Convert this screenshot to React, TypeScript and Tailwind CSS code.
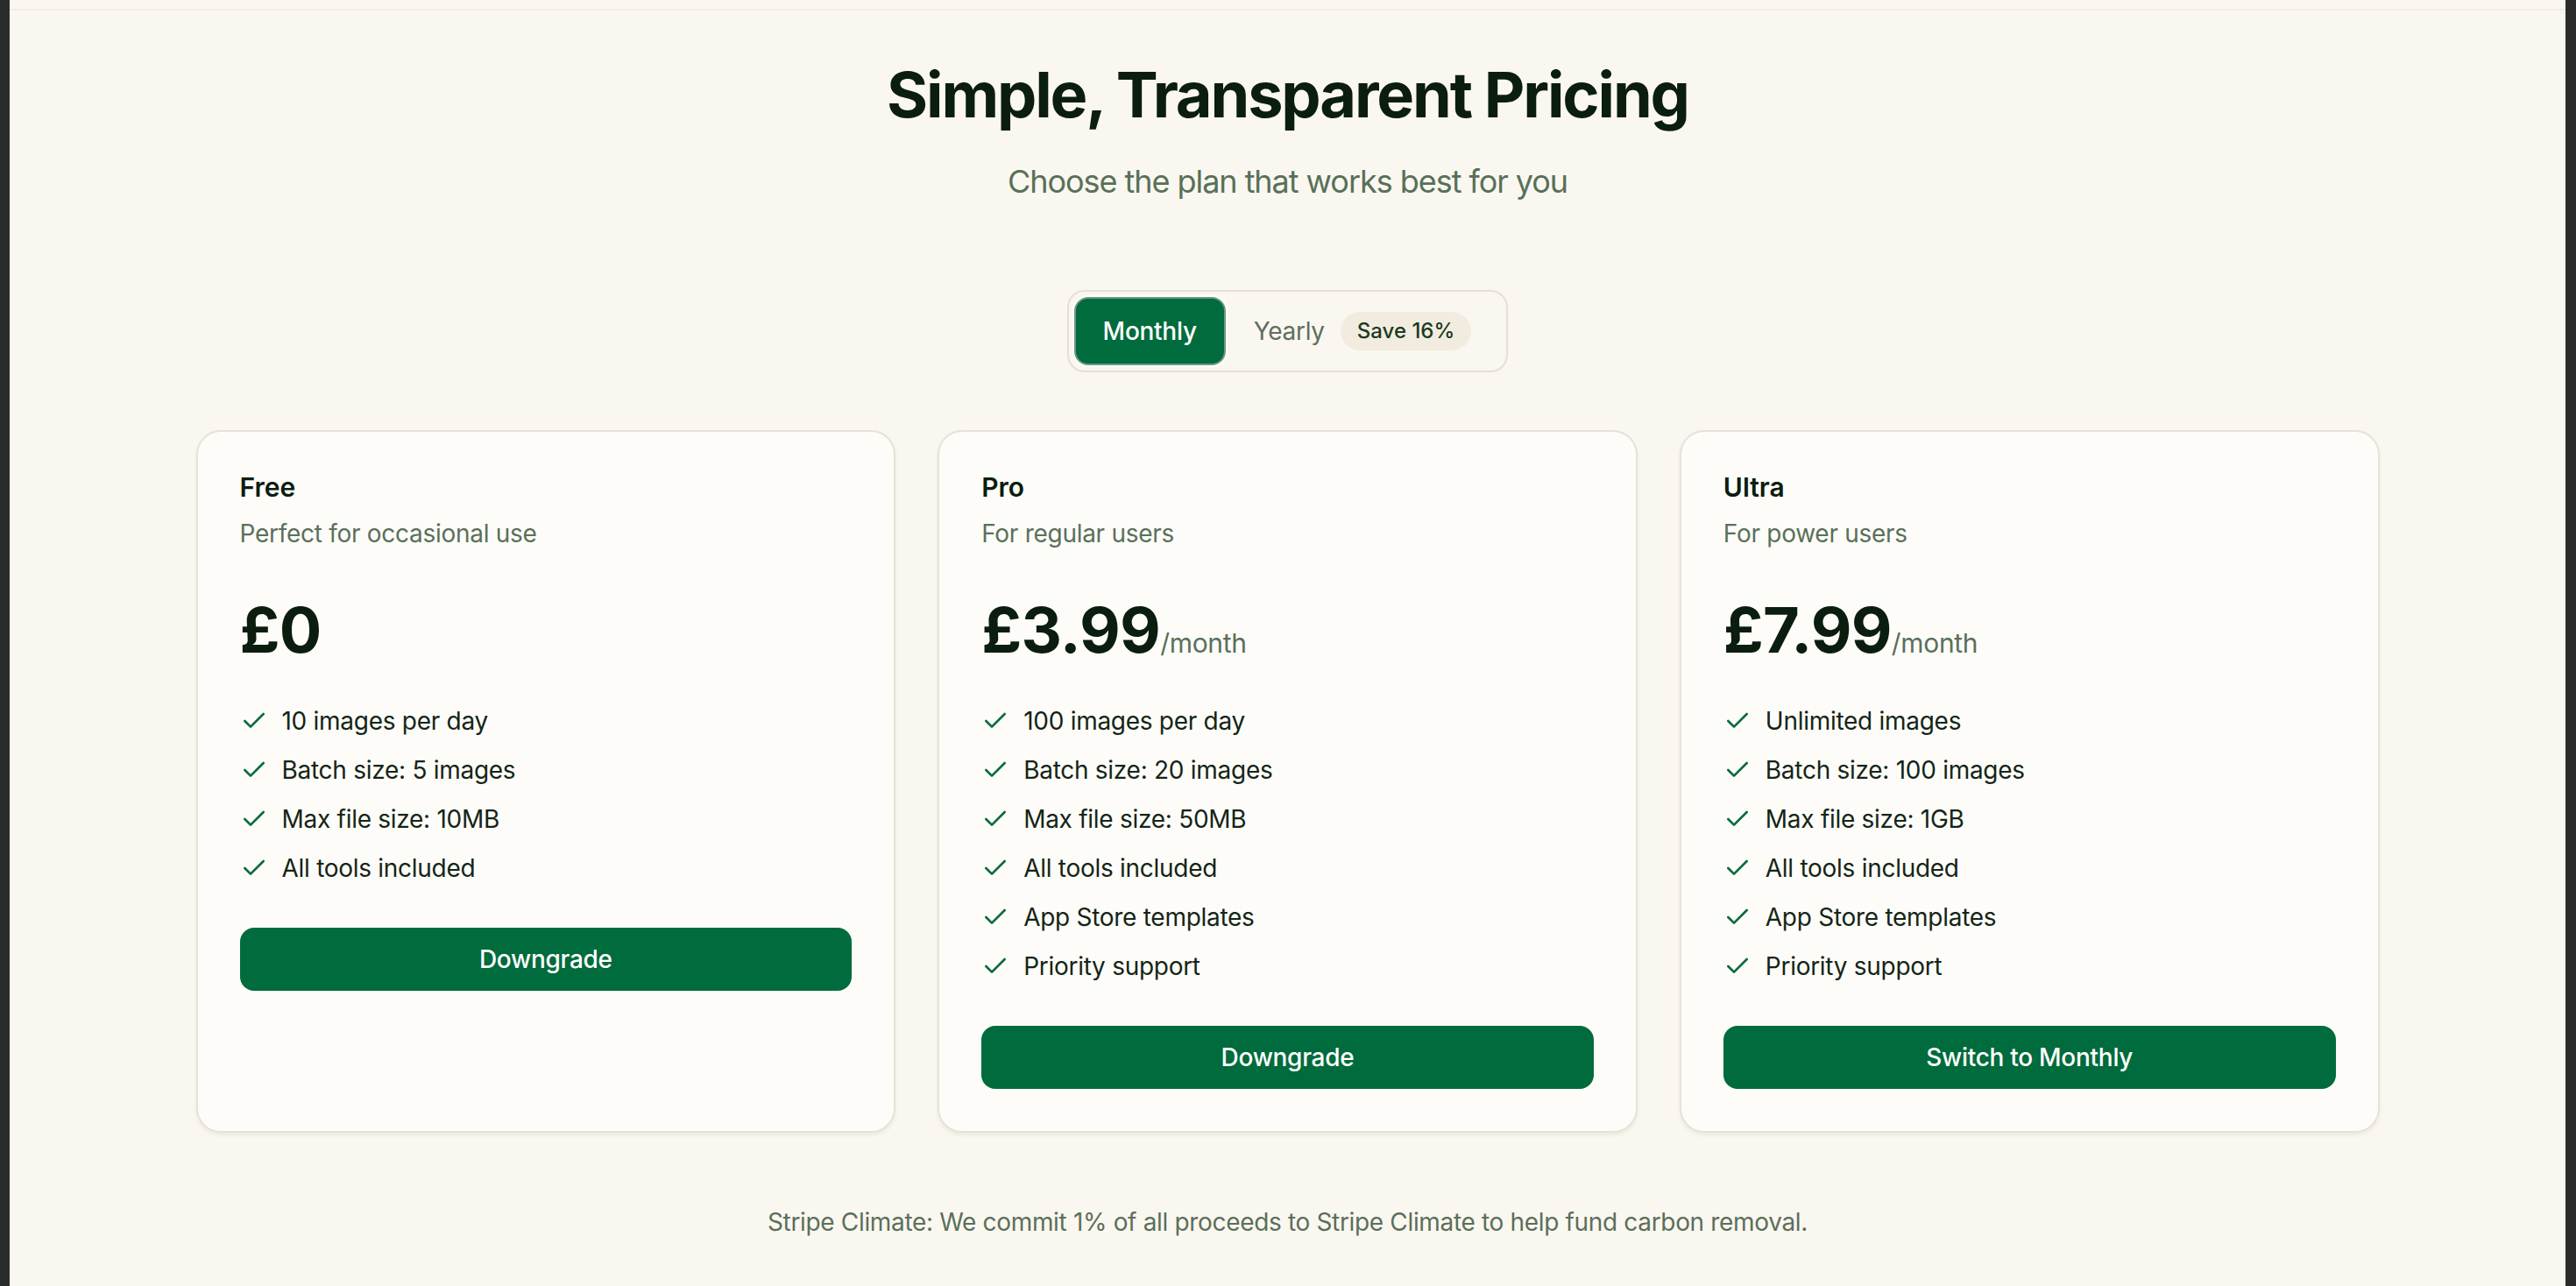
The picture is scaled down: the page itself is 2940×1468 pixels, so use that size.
import { Check } from "lucide-react";

type Plan = {
  name: string;
  blurb: string;
  price: string;
  perMonth: boolean;
  features: string[];
  cta: string;
};

const plans: Plan[] = [
  {
    name: "Free",
    blurb: "Perfect for occasional use",
    price: "£0",
    perMonth: false,
    features: ["10 images per day", "Batch size: 5 images", "Max file size: 10MB", "All tools included"],
    cta: "Downgrade",
  },
  {
    name: "Pro",
    blurb: "For regular users",
    price: "£3.99",
    perMonth: true,
    features: [
      "100 images per day",
      "Batch size: 20 images",
      "Max file size: 50MB",
      "All tools included",
      "App Store templates",
      "Priority support",
    ],
    cta: "Downgrade",
  },
  {
    name: "Ultra",
    blurb: "For power users",
    price: "£7.99",
    perMonth: true,
    features: [
      "Unlimited images",
      "Batch size: 100 images",
      "Max file size: 1GB",
      "All tools included",
      "App Store templates",
      "Priority support",
    ],
    cta: "Switch to Monthly",
  },
];

function PlanCard({ plan }: { plan: Plan }) {
  return (
    <div className="flex flex-col rounded-[28px] border-2 border-[#e7e2d7] bg-[#fdfcf9] p-12 shadow-[0_3px_4px_rgba(70,55,20,0.07)]">
      <div className="text-[30px] font-semibold leading-[30px] text-[#0b1d0f]">{plan.name}</div>
      <div className="mt-[18px] text-[28px] leading-[40px] tracking-[-0.01em] text-[#5a705a]">{plan.blurb}</div>
      <div className="mt-[50px] flex items-baseline">
        <span className="text-[72px] font-bold leading-[80px] tracking-[-0.01em] text-[#0b1d0f]">{plan.price}</span>
        {plan.perMonth && <span className="text-[30px] tracking-[-0.01em] text-[#5a705a]">/month</span>}
      </div>
      <ul className="mt-[44px] flex flex-col gap-4">
        {plan.features.map((f) => (
          <li key={f} className="flex items-center gap-4 text-[28px] leading-[40px] tracking-[-0.01em] text-[#142516]">
            <Check size={32} strokeWidth={2} className="shrink-0 text-[#0b6b3e]" />
            <span>{f}</span>
          </li>
        ))}
      </ul>
      <button className="mt-12 h-[72px] w-full rounded-2xl bg-[#006b3c] text-[28px] font-medium tracking-[-0.01em] text-white">
        {plan.cta}
      </button>
    </div>
  );
}

export default function App() {
  return (
    <div className="flex min-h-screen font-['Inter','Noto_Sans',sans-serif]">
      <div className="w-[11px] shrink-0 bg-[#2b2b2b]" />
      <div className="flex flex-1 flex-col bg-[#faf7f0]">
        <div className="h-[12px] border-b-2 border-[#f1ede4]" />
        <div className="flex flex-col items-center pt-14 pb-16">
          <h1 className="text-[72px] font-bold leading-[80px] tracking-[-0.03em] text-[#0b1d0f]">
            Simple, Transparent Pricing
          </h1>
          <p className="mt-[31px] text-[36px] leading-[56px] tracking-[-0.029em] text-[#587058]">
            Choose the plan that works best for you
          </p>

          <div className="mt-[96px] flex items-center rounded-[20px] border-2 border-[#e5e0d3] p-[6px]">
            <button className="h-[78px] w-[173px] rounded-2xl border-2 border-[#6f9a82] bg-[#006b3c] text-[28px] font-medium tracking-[-0.01em] text-white shadow-[0_0_0_2px_#ffffff]">
              Monthly
            </button>
            <div className="flex h-[78px] items-center gap-[18px] pl-8 pr-[34px]">
              <span className="text-[28px] tracking-[-0.01em] text-[#5d6f5c]">Yearly</span>
              <span className="rounded-full bg-[#f2ece0] px-[19px] py-[6px] text-[24px] font-medium leading-[32px] text-[#1b3a22]">
                Save 16%
              </span>
            </div>
          </div>

          <div className="mt-[66px] grid w-[2492px] grid-cols-3 gap-12">
            {plans.map((p) => (
              <PlanCard key={p.name} plan={p} />
            ))}
          </div>

          <p className="mt-[82px] text-[28px] leading-[40px] tracking-[-0.012em] text-[#5b6f5a]">
            Stripe Climate: We commit 1% of all proceeds to Stripe Climate to help fund carbon removal.
          </p>
        </div>
      </div>
      <div className="w-[12px] shrink-0 bg-[#2b2b2b]" />
    </div>
  );
}
